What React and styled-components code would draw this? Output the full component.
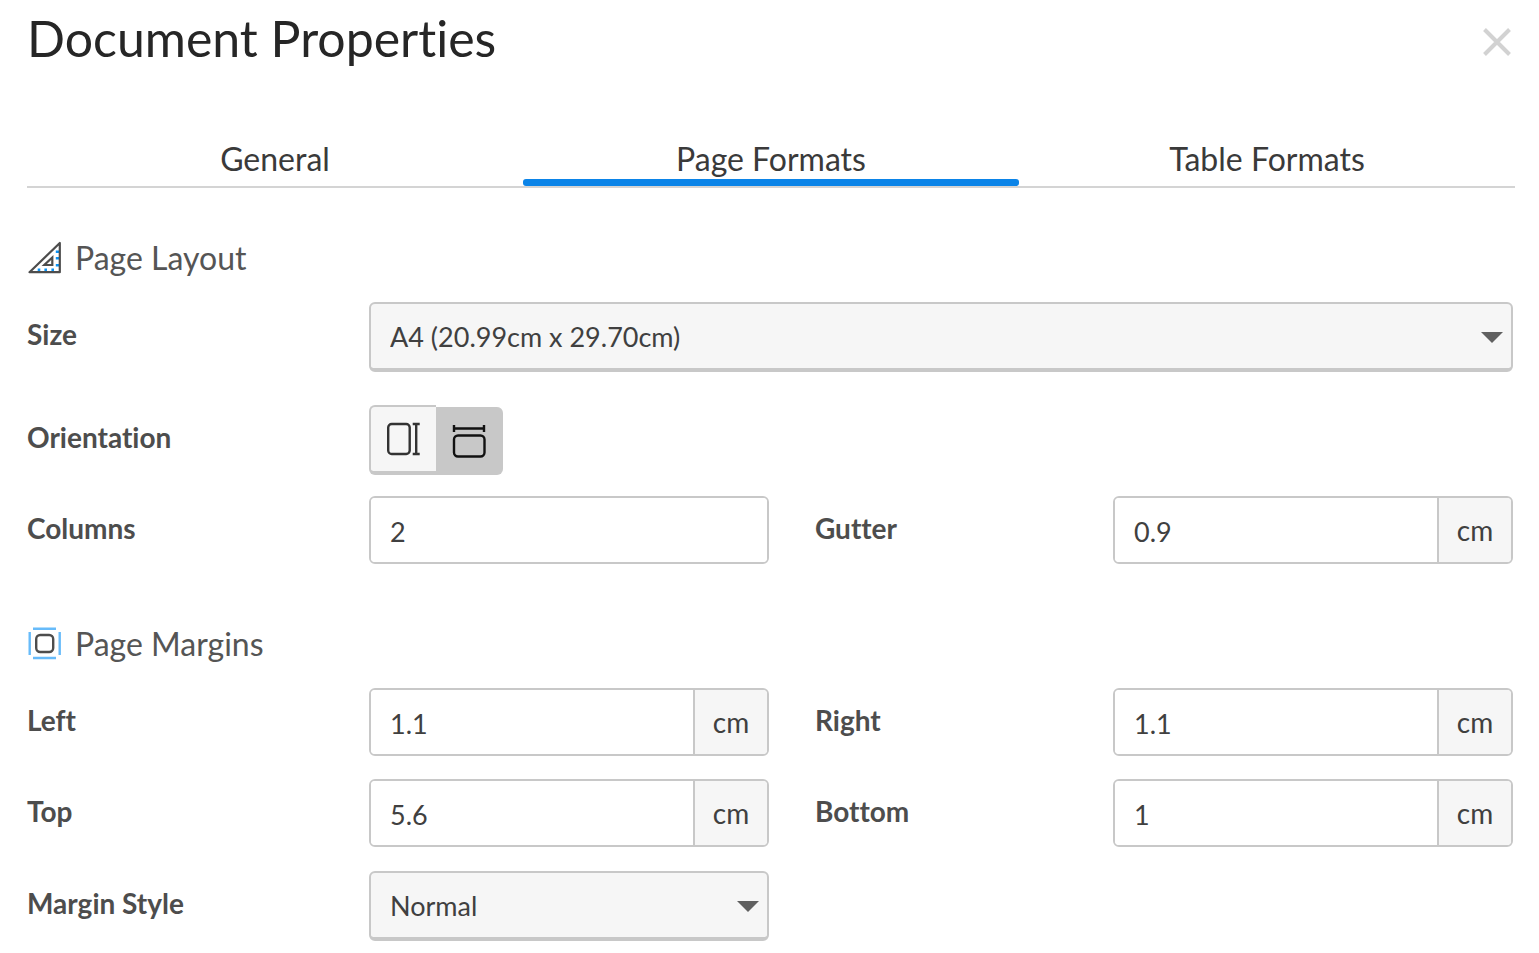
import React, { useState } from 'react';
import styled, { createGlobalStyle } from 'styled-components';

const TABS = ['General', 'Page Formats', 'Table Formats'];

const SetSquareIcon = () => (
  <svg width="36" height="36" viewBox="0 0 36 36" fill="none" aria-hidden="true">
    <path
      d="M28.8 11.7h3.4M28.8 18.3h3.4M28.8 25.3h3.4M12 28.6v2.6M18.7 28.6v2.6M25.7 28.6v2.6"
      stroke="#0b93f5"
      strokeWidth="2.6"
    />
    <path d="M32.8 3v29.2h-30.3z" stroke="#4d4d4d" strokeWidth="2.2" strokeLinejoin="round" />
    <path d="M25.3 17.5v7.5h-8z" stroke="#4d4d4d" strokeWidth="2.2" />
  </svg>
);

const MarginsIcon = () => (
  <svg width="36" height="36" viewBox="0 0 36 36" fill="none" aria-hidden="true">
    <path d="M6 2.7h23M6 32h23M2.7 6v23M32.7 6v23" stroke="#67bbfa" strokeWidth="2.4" />
    <rect x="9.2" y="9" width="17" height="17" rx="4" stroke="#4d4d4d" strokeWidth="2.4" />
  </svg>
);

const PortraitIcon = () => (
  <svg width="34" height="34" viewBox="0 0 34 34" fill="none" stroke="#333" strokeWidth="2.4" aria-hidden="true">
    <rect x="1.2" y="2" width="21.5" height="30" rx="3.5" />
    <path d="M25.7 2h7M25.7 32h7M29.2 2v30" />
  </svg>
);

const LandscapeIcon = () => (
  <svg width="34" height="34" viewBox="0 0 34 34" fill="none" stroke="#111" strokeWidth="2.4" aria-hidden="true">
    <path d="M2 1v7M32 1v7M2 4.500h30" />
    <rect x="2" y="11.500" width="30.5" height="21" rx="4" />
  </svg>
);

const CloseIcon = () => (
  <svg width="28" height="28" viewBox="0 0 28 28" stroke="#d2d2d2" strokeWidth="4" aria-hidden="true">
    <path d="M1.5 1.5l25 25M26.5 1.5l-25 25" />
  </svg>
);

const TextField = ({ id, label, value, unit, second }) => (
  <>
    <FieldLabel htmlFor={id} $second={second}>{label}</FieldLabel>
    <InputGroup>
      <Input id={id} type="text" defaultValue={value} />
      {unit && <Unit>{unit}</Unit>}
    </InputGroup>
  </>
);

const SelectField = ({ id, label, options, wide }) => (
  <>
    <FieldLabel htmlFor={id}>{label}</FieldLabel>
    <SelectWrapper $wide={wide}>
      <Select id={id}>
        {options.map(option => <option key={option}>{option}</option>)}
      </Select>
      <Caret width="22" height="11" viewBox="0 0 22 11" aria-hidden="true">
        <path d="M0 0h22l-11 11z" fill="#606060" />
      </Caret>
    </SelectWrapper>
  </>
);

const App = () => {
  const [tab, setTab] = useState('Page Formats');
  const [orientation, setOrientation] = useState('landscape');

  return (
    <Dialog role="dialog" aria-labelledby="dialog-title">
      <GlobalStyle />
      <Header>
        <Title id="dialog-title">Document Properties</Title>
        <CloseButton type="button" aria-label="Close"><CloseIcon /></CloseButton>
      </Header>
      <TabList role="tablist">
        {TABS.map(name => (
          <Tab
            key={name}
            type="button"
            role="tab"
            aria-selected={tab === name}
            $active={tab === name}
            onClick={() => setTab(name)}
          >
            {name}
          </Tab>
        ))}
      </TabList>
      <Form>
        <SectionTitle><SetSquareIcon />Page Layout</SectionTitle>
        <Row $space={33}>
          <SelectField id="size" label="Size" options={['A4 (20.99cm x 29.70cm)']} wide />
        </Row>
        <Row $space={21}>
          <FieldLabel as="span" id="orientation-label">Orientation</FieldLabel>
          <ToggleGroup role="group" aria-labelledby="orientation-label">
            <Toggle
              type="button"
              aria-label="Portrait"
              aria-pressed={orientation === 'portrait'}
              $active={orientation === 'portrait'}
              onClick={() => setOrientation('portrait')}
            >
              <PortraitIcon />
            </Toggle>
            <Toggle
              type="button"
              aria-label="Landscape"
              aria-pressed={orientation === 'landscape'}
              $active={orientation === 'landscape'}
              onClick={() => setOrientation('landscape')}
            >
              <LandscapeIcon />
            </Toggle>
          </ToggleGroup>
        </Row>
        <Row $space={57}>
          <TextField id="columns" label="Columns" value="2" />
          <TextField id="gutter" label="Gutter" value="0.9" unit="cm" second />
        </Row>

        <SectionTitle><MarginsIcon />Page Margins</SectionTitle>
        <Row $space={23}>
          <TextField id="left" label="Left" value="1.1" unit="cm" />
          <TextField id="right" label="Right" value="1.1" unit="cm" second />
        </Row>
        <Row $space={24}>
          <TextField id="top" label="Top" value="5.6" unit="cm" />
          <TextField id="bottom" label="Bottom" value="1" unit="cm" second />
        </Row>
        <Row $space={0}>
          <SelectField id="margin-style" label="Margin Style" options={['Normal', 'Narrow', 'Wide']} />
        </Row>
      </Form>
    </Dialog>
  );
};

const GlobalStyle = createGlobalStyle`
  * {
    box-sizing: border-box;
  }

  body {
    background-color: #fff;
    color: #404040;
    font-family: Lato, sans-serif;
    font-variant-ligatures: none;
    margin: 0;
  }

  button, input, select {
    color: inherit;
    font-family: inherit;
    margin: 0;
  }
`;

const Dialog = styled.main`
  padding: 6px 24px 12px 27px;
`;

const Header = styled.header`
  align-items: center;
  display: flex;
  justify-content: space-between;
`;

const Title = styled.h1`
  color: #262626;
  font-size: 50px;
  font-weight: 400;
  line-height: 64px;
  margin: 0;
`;

const CloseButton = styled.button`
  background: none;
  border: 0;
  cursor: pointer;
  display: flex;
  padding: 8px 4px 0;
`;

const TabList = styled.div`
  border-bottom: 2px solid #d4d4d4;
  display: flex;
  margin-top: 63px;
`;

const Tab = styled.button`
  background: none;
  border: 0;
  color: #3a3a3a;
  cursor: pointer;
  flex: 1;
  font-size: 32px;
  line-height: 52px;
  padding: 0 0 1px;
  position: relative;

  &::after {
    background-color: ${({ $active }) => ($active ? '#0b84e8' : 'transparent')};
    border-radius: 3px;
    bottom: 0;
    content: '';
    height: 7px;
    left: 0;
    position: absolute;
    right: 0;
  }
`;

const Form = styled.form`
  padding: 47px 2px 0 0;
`;

const SectionTitle = styled.h2`
  align-items: center;
  color: #555;
  display: flex;
  font-size: 32px;
  font-weight: 400;
  gap: 12px;
  line-height: 46px;
  margin: 0 0 21px;
`;

const Row = styled.div`
  align-items: start;
  display: grid;
  grid-template-columns: 342px 1fr 344px 1fr;
  margin-bottom: ${({ $space }) => $space}px;
`;

const FieldLabel = styled.label`
  color: #4d4d4d;
  font-size: 28px;
  font-weight: 700;
  line-height: 64px;
  padding-left: ${({ $second }) => ($second ? '46px' : '0')};
`;

const InputGroup = styled.div`
  border: 2px solid #c8c8c8;
  border-radius: 6px;
  display: flex;
  height: 68px;
  overflow: hidden;
`;

const Input = styled.input`
  background-color: #fff;
  border: 0;
  flex: 1;
  font-size: 27px;
  min-width: 0;
  outline: 0;
  padding: 2px 19px 0;
`;

const Unit = styled.span`
  background-color: #f6f6f6;
  border-left: 2px solid #c8c8c8;
  font-size: 28px;
  line-height: 64px;
  text-align: center;
  width: 74px;
`;

const SelectWrapper = styled.div`
  grid-column: ${({ $wide }) => ($wide ? '2 / -1' : '2')};
  position: relative;
`;

const Select = styled.select`
  appearance: none;
  background-color: #f6f6f6;
  border: 2px solid #c8c8c8;
  border-bottom-width: 4px;
  border-radius: 6px;
  display: block;
  font-size: 27px;
  height: 70px;
  padding: 0 44px 0 19px;
  width: 100%;
`;

const Caret = styled.svg`
  pointer-events: none;
  position: absolute;
  right: 10px;
  top: 30px;
`;

const ToggleGroup = styled.div`
  align-items: flex-end;
  display: flex;
`;

const Toggle = styled.button`
  align-items: center;
  background-color: ${({ $active }) => ($active ? '#c8c8c8' : '#f6f6f6')};
  border: 2px solid #c8c8c8;
  border-bottom-width: 4px;
  border-top-width: ${({ $active }) => ($active ? '0' : '2px')};
  cursor: pointer;
  display: flex;
  height: ${({ $active }) => ($active ? '68px' : '70px')};
  justify-content: center;
  padding: ${({ $active }) => ($active ? '4px 0 0' : '0')};
  width: 67px;

  &:first-child {
    border-radius: 6px 0 0 6px;
    border-right-width: 0;
  }

  &:last-child {
    border-left-width: 0;
    border-radius: 0 6px 6px 0;
  }
`;

export default App;
